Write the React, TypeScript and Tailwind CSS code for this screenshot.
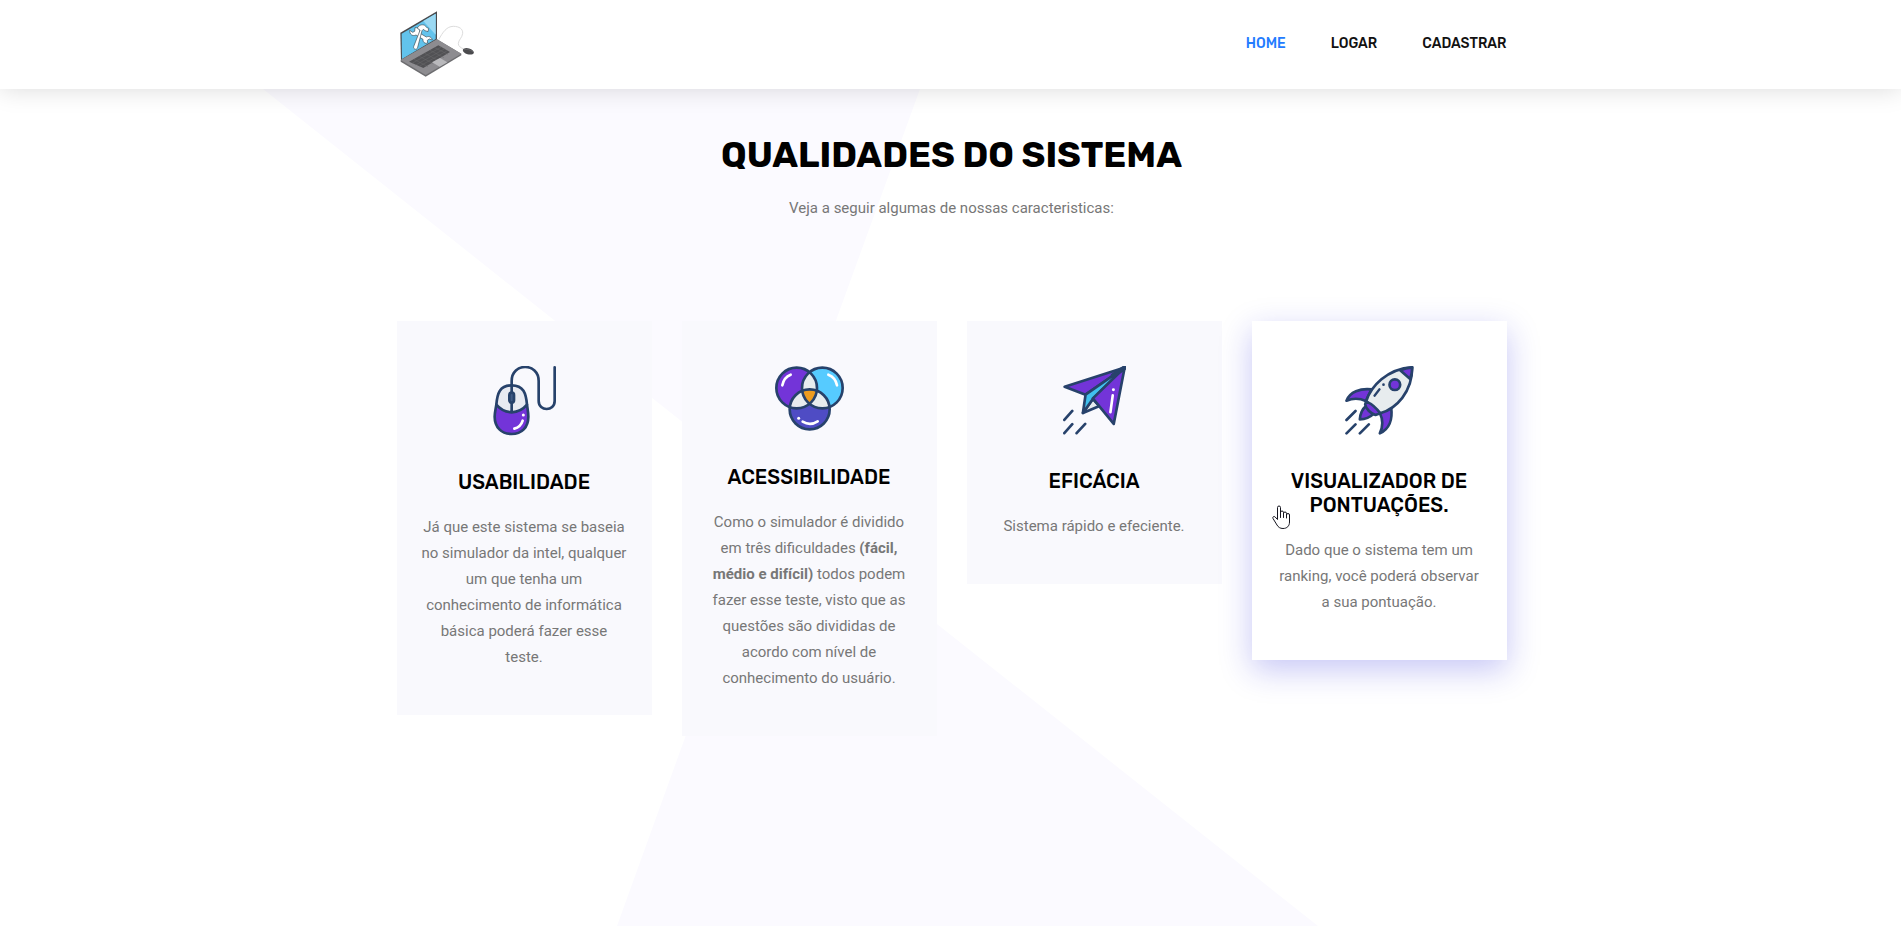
import type { ReactNode } from "react";

const heading = "font-['Rubik','Inter',sans-serif]";

function Logo() {
  return (
    <svg viewBox="30 33 222 198" className="h-[66px] w-[74px]" aria-hidden="true">
      <path d="M146 119C158 97 170 79 190 79c18 0 29 8 28 21-1 13-13 20-13 31 0 8 7 12 16 16" fill="none" stroke="#dcdcdc" strokeWidth="3" />
      <polygon points="31,98 141,34 141,120 33,183" fill="#4a4b4e" />
      <polygon points="35,101 137,41 137,117 36,177" fill="#62c3ec" />
      <polygon points="100,63 137,41 137,104" fill="#9bd9f3" />
      <polygon points="32,181 141,118 214,161 214,166 107,230 32,185" fill="#6d6d70" />
      <polygon points="32,180 141,118 214,161 107,225" fill="#8d8c90" />
      <polygon points="57,185 145,136 180,156 100,204" fill="#515154" />
      <path d="M66 190l88-49M77 195l88-49M88 199l84-47M72 178l42 22M88 169l42 22M104 160l42 22M120 151l42 22M134 143l40 20" stroke="#6a6a6d" strokeWidth="1.5" />
      <polygon points="126,187 150,174 172,187 149,200" fill="#b9b9bc" />
      <g stroke="#3c4a52" strokeWidth="2" fill="#fff" strokeLinejoin="round">
        <path d="M59 91l9 6 6-3 1-11c10-1 16 6 14 16l20 12c9-4 16 1 18 9l-9-3-6 4 1 8c-9 3-15-3-14-11l-21-13c-10 5-20-2-19-14z" />
        <path d="M82 84c4-8 14-12 22-8l7 7 5 2-2 10-9-3-5-4-4 4-13 50c-1 5-5 7-9 5s-4-6-2-10l18-46-5-5z" />
      </g>
      <ellipse cx="235" cy="154" rx="17" ry="9" transform="rotate(16 235 154)" fill="#4b4b4e" />
      <path d="M221 150c8-4 20-1 28 5" fill="none" stroke="#6d6d70" strokeWidth="2" />
    </svg>
  );
}

const outline = {
  stroke: "#27426b",
  strokeWidth: 8,
  strokeLinecap: "round" as const,
  strokeLinejoin: "round" as const,
};

function MouseIcon() {
  return (
    <svg viewBox="39 47 189 210" className="h-[70px] w-[63px]" aria-hidden="true">
      <path d="M49 163C50 128 59 105 95 105s45 23 46 58c-10 12-26 21-46 23-20-2-36-11-46-23z" fill="#e8eaf1" />
      <path d="M49 163c10 12 26 21 46 23 20-2 36-11 46-23 2 14 4 24 4 36 0 32-20 52-50 52s-51-20-51-52c0-12 3-22 5-36z" fill="#7334d8" />
      <g fill="none" {...outline}>
        <path d="M95 105c-36 0-43 24-46 58-2 14-5 24-5 36 0 32 21 52 51 52s50-20 50-52c0-12-2-22-4-36-3-34-10-58-46-58z" />
        <path d="M49 163c10 12 26 22 46 23 20-1 36-11 46-23M95 184V92c0-56 81-56 81 0v60c0 32 48 32 48 0V51" />
        <rect x="88" y="127" width="14" height="30" rx="7" fill="#3f5a86" />
      </g>
      <path d="M128 211c-4 13-12 21-25 24" fill="none" stroke="#fff" strokeWidth="8" strokeLinecap="round" />
      <circle cx="130" cy="194" r="4.5" fill="#fff" />
    </svg>
  );
}

function CirclesIcon() {
  return (
    <svg viewBox="30 46 207 195" className="h-[65px] w-[69px]" aria-hidden="true">
      <defs>
        <clipPath id="left-circle"><circle cx="95" cy="112" r="61" /></clipPath>
        <clipPath id="right-circle"><circle cx="172" cy="112" r="61" /></clipPath>
        <clipPath id="low-circle"><circle cx="134" cy="176" r="60" /></clipPath>
      </defs>
      <circle cx="95" cy="112" r="61" fill="#7334d8" />
      <circle cx="172" cy="112" r="61" fill="#56cbff" />
      <circle cx="134" cy="176" r="60" fill="#4f4cc4" />
      <g fill="#e7ecee">
        <circle cx="172" cy="112" r="61" clipPath="url(#left-circle)" />
        <circle cx="95" cy="112" r="61" clipPath="url(#low-circle)" />
        <circle cx="172" cy="112" r="61" clipPath="url(#low-circle)" />
      </g>
      <g clipPath="url(#low-circle)">
        <circle cx="172" cy="112" r="61" fill="#ee9c1f" clipPath="url(#left-circle)" />
      </g>
      <g fill="none" {...outline}>
        <circle cx="95" cy="112" r="61" />
        <circle cx="172" cy="112" r="61" />
        <circle cx="134" cy="176" r="60" />
      </g>
      <path d="M52 104c3-16 12-27 25-32M190 72c13 5 23 16 26 32M113 213c14 8 31 8 45-1" fill="none" stroke="#fff" strokeWidth="8" strokeLinecap="round" />
      <circle cx="101" cy="203" r="4.5" fill="#fff" />
    </svg>
  );
}

function PlaneIcon() {
  return (
    <svg viewBox="38 47 190 207" className="h-[69px] w-[63px]" aria-hidden="true">
      <g {...outline}>
        <path d="M224 51L43 109l63 24z" fill="#7334d8" />
        <path d="M98 188l30-42 20 21z" fill="#e7ecee" />
        <path d="M224 51L106 133l-8 55 30-42z" fill="#40c0ee" />
        <path d="M224 51l-96 93 63 77z" fill="#7334d8" />
        <path d="M224 51l-35 24" strokeWidth="14" />
        <path d="M42 209l24-27M42 249l24-27M79 249l26-28" fill="none" />
      </g>
      <path d="M188 135l-7 51" stroke="#fff" strokeWidth="8" strokeLinecap="round" />
      <circle cx="190" cy="118" r="4.5" fill="#fff" />
    </svg>
  );
}

function RocketIcon() {
  return (
    <svg viewBox="29 47 206 207" className="h-[69px] w-[69px]" aria-hidden="true">
      <g {...outline}>
        <path d="M108 117c-34-4-65 8-75 34 20-8 38-8 58 1z" fill="#7334d8" />
        <path d="M133 188c10 20 10 40 0 61 28-12 39-41 34-77z" fill="#7334d8" />
        <path d="M92 166c-13 11-18 24-19 41 16 0 29-4 42-17z" fill="#7334d8" />
        <path d="M92 153c14-44 62-98 138-102 1 74-48 124-96 138z" fill="#e7ecee" />
        <path d="M194 60c11-5 23-8 36-9 0 12-2 24-6 35z" fill="#7334d8" />
        <path d="M92 153c15 7 32 21 42 36l-14 5c-15-4-29-19-31-32z" fill="#7334d8" />
        <circle cx="178" cy="103" r="16" fill="#7334d8" />
        <path d="M132 117l-15 19" fill="none" strokeWidth="7" />
        <path d="M33 209l27-27M33 249l27-27M73 249l27-27" fill="none" />
      </g>
      <circle cx="144" cy="103" r="4" fill="#27426b" />
    </svg>
  );
}

function HandPointer() {
  return (
    <svg viewBox="0 0 19 25" className="absolute left-5 top-[184px] h-[25px] w-[19px]" aria-hidden="true">
      <path
        d="M5.500 14.500V2.500a1.500 1.500 0 0 1 3 0v7V7.500a1.400 1.400 0 0 1 3 0v3-2a1.400 1.400 0 0 1 3 0v3-1.500a1.400 1.400 0 0 1 3 0v7c0 4-2.500 6.500-6.500 6.500-3 0-4.700-1.300-6-3.500l-4-6.500c-.8-1.500 1-2.800 2.200-1.500z"
        fill="#fff"
        stroke="#15151f"
        strokeLinejoin="round"
      />
      <path d="M8.500 8v4.500M11.500 9v3.500M14.500 10v3" stroke="#15151f" strokeLinecap="round" />
    </svg>
  );
}

type Feature = {
  title: string;
  icon: ReactNode;
  text: ReactNode;
  active?: boolean;
};

const features: Feature[] = [
  {
    title: "Usabilidade",
    icon: <MouseIcon />,
    text: "Já que este sistema se baseia no simulador da intel, qualquer um que tenha um conhecimento de informática básica poderá fazer esse teste.",
  },
  {
    title: "Acessibilidade",
    icon: <CirclesIcon />,
    text: (
      <>
        Como o simulador é dividido em três dificuldades <strong className="font-bold">(fácil, médio e difícil)</strong> todos
        podem fazer esse teste, visto que as questões são divididas de acordo com nível de conhecimento do usuário.
      </>
    ),
  },
  { title: "Eficácia", icon: <PlaneIcon />, text: "Sistema rápido e efeciente." },
  {
    title: "Visualizador de Pontuações.",
    icon: <RocketIcon />,
    text: "Dado que o sistema tem um ranking, você poderá observar a sua pontuação.",
    active: true,
  },
];

function FeatureCard({ title, icon, text, active }: Feature) {
  return (
    <article
      className={`relative flex flex-col items-center px-[25px] py-[45px] text-center ${
        active ? "bg-white shadow-[0_10px_30px_rgba(31,31,218,0.25)]" : "bg-[#f9f9fd]"
      }`}
    >
      {icon}
      <h2 className={`mt-[34px] text-[20px] font-medium leading-6 text-black uppercase ${heading}`}>{title}</h2>
      <p className="mt-5 text-[15px] leading-[26px] text-[#777777]">{text}</p>
      {active && <HandPointer />}
    </article>
  );
}

const links = [
  { label: "Home", active: true },
  { label: "Logar", active: false },
  { label: "Cadastrar", active: false },
];

export default function App() {
  return (
    <div className="flex min-h-screen flex-col bg-white font-['Roboto',sans-serif]">
      <header className="relative z-10 bg-white pb-[2px] pl-[2px] shadow-[0_0_24px_rgba(0,0,0,0.15)]">
        <div className="mx-auto flex h-[87px] max-w-[1110px] items-center justify-between">
          <a href="#inicio" aria-label="Início" className="pl-[3px]">
            <Logo />
          </a>
          <nav className="flex gap-[45px]">
            {links.map((link) => (
              <a
                key={link.label}
                href={`#${link.label.toLowerCase()}`}
                className={`text-[14px] font-medium leading-5 uppercase ${heading} ${
                  link.active ? "text-[#237bff]" : "text-[#111111]"
                }`}
              >
                {link.label}
              </a>
            ))}
          </nav>
        </div>
      </header>

      <main className="relative flex-1 pb-24 pl-[2px]">
        <svg
          viewBox="0 0 1901 837"
          preserveAspectRatio="none"
          className="absolute inset-0 h-full w-full"
          aria-hidden="true"
        >
          <path d="M263 0H920L773 405zM773 405L1318 837H617z" fill="#fbfaff" />
        </svg>

        <div className="relative mx-auto max-w-[1110px] pt-11">
          <div className="text-center">
            <h1 className={`text-[36px] font-bold leading-[44px] text-black uppercase ${heading}`}>Qualidades do sistema</h1>
            <p className="mt-[18px] text-[15px] leading-[26px] text-[#777777]">
              Veja a seguir algumas de nossas caracteristicas:
            </p>
          </div>
          <div className="mt-[100px] grid grid-cols-4 items-start gap-[30px]">
            {features.map((feature) => (
              <FeatureCard key={feature.title} {...feature} />
            ))}
          </div>
        </div>
      </main>
    </div>
  );
}
